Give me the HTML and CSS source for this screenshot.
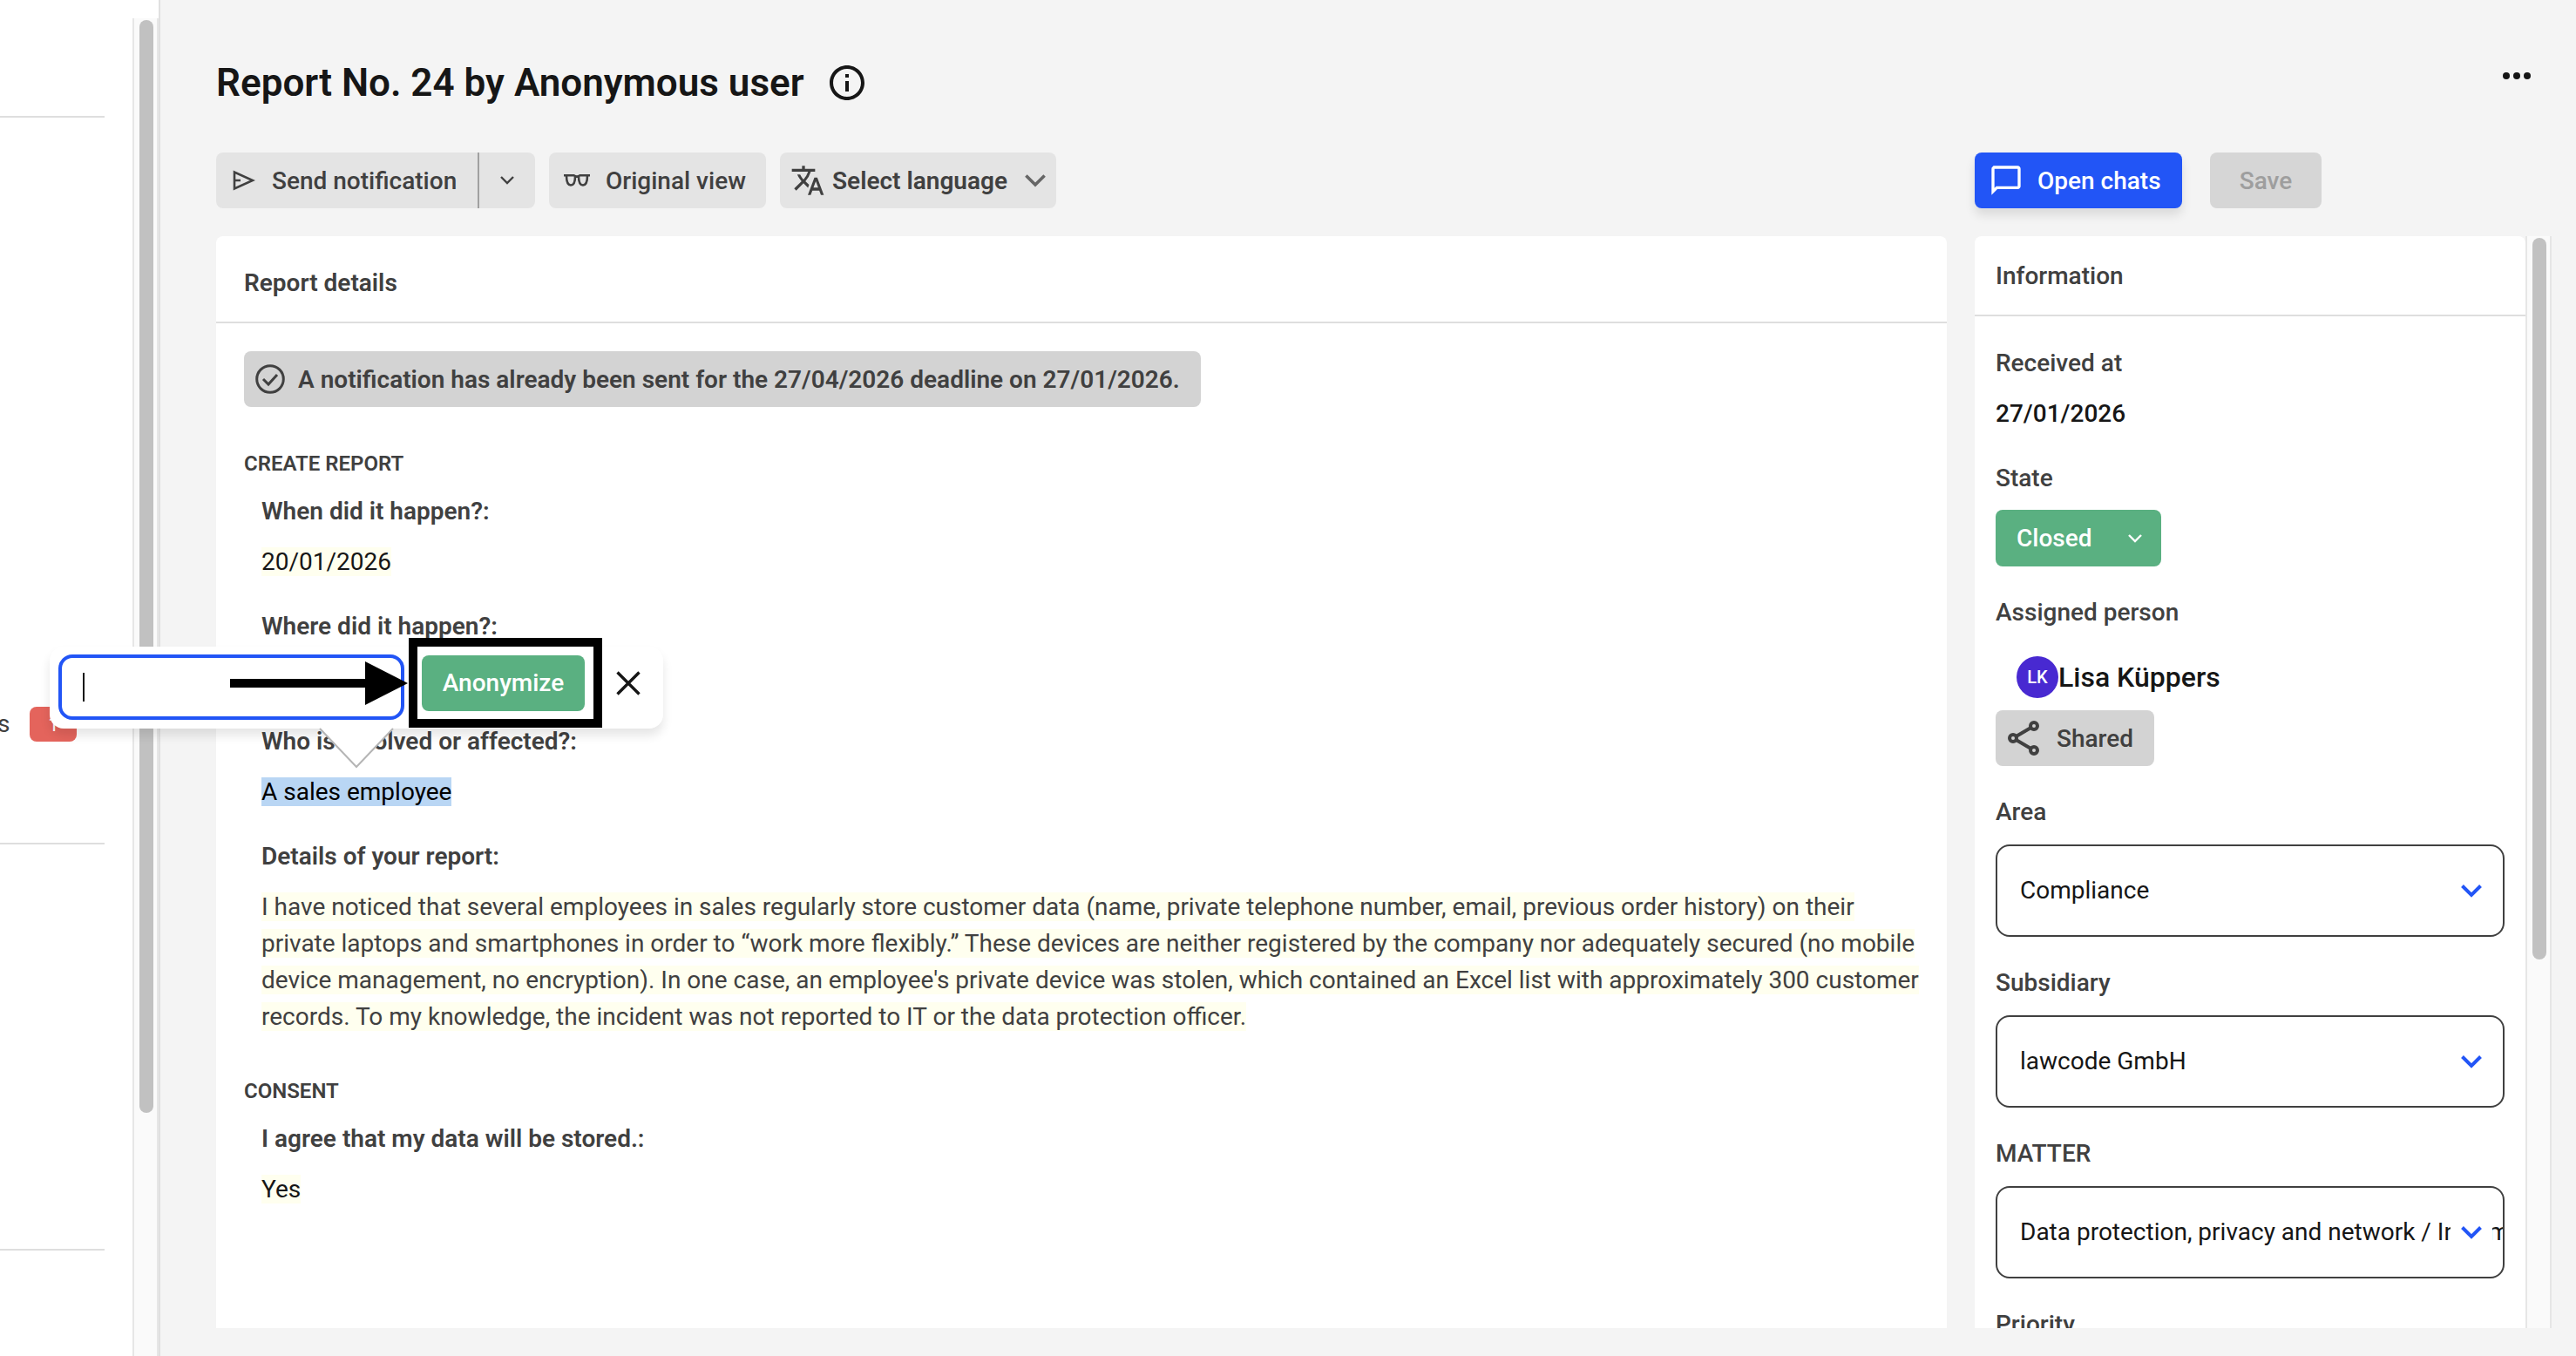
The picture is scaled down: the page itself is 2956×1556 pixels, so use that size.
FILE: index.html
```html
<!DOCTYPE html>
<html lang="en">

<head>
    <meta charset="UTF-8">
    <meta name="viewport" content="width=device-width, initial-scale=1.0">
    <title>Report No. 24</title>
    <link rel="stylesheet" href="styles.css">
</head>

<body>
    <aside class="sidebar">
        <nav class="nav">
            <div class="nav-group"></div>
            <div class="nav-group nav-group-open">
                <div class="nav-item"><span>s</span><span class="badge">1</span></div>
            </div>
            <div class="nav-group nav-group-last"></div>
        </nav>
        <div class="track side-track"><div class="thumb"></div></div>
    </aside>

    <main class="main">
        <header class="title-row">
            <h1>Report No. 24 by Anonymous user</h1>
            <svg class="info-icon" width="48" height="48" viewBox="0 0 24 24" fill="currentColor"><path d="M11 7h2v2h-2zm0 4h2v6h-2zm1-9C6.48 2 2 6.48 2 12s4.48 10 10 10 10-4.48 10-10S17.52 2 12 2zm0 18c-4.41 0-8-3.59-8-8s3.590-8 8-8 8 3.590 8 8-3.590 8-8 8z"/></svg>
            <svg class="more-icon" width="32" height="8" viewBox="0 0 32 8" fill="currentColor"><circle cx="4" cy="4" r="4"/><circle cx="16" cy="4" r="4"/><circle cx="28" cy="4" r="4"/></svg>
        </header>

        <div class="columns">
            <section class="left">
                <div class="toolbar">
                    <div class="btn split">
                        <div class="split-main">
                            <svg width="26" height="24" viewBox="0 0 26 24" fill="none" stroke="currentColor" stroke-width="2.6"><path d="M2 2.500v19L23 12zM2 12h7"/></svg>
                            <span>Send notification</span>
                        </div>
                        <div class="split-arrow">
                            <svg width="16" height="10" viewBox="0 0 16 10" fill="none" stroke="currentColor" stroke-width="2.4"><path d="M1 1l7 7 7-7"/></svg>
                        </div>
                    </div>
                    <div class="btn view">
                        <svg width="30" height="16" viewBox="0 0 30 16" fill="none" stroke="currentColor" stroke-width="2.6"><path d="M0 2.300h11.500q3.500 2.500 7 0H30M3 2.500c0 7 1.500 11 5 11s5-4 5-10M27 2.500c0 7-1.500 11-5 11s-5-4-5-10"/></svg>
                        <span>Original view</span>
                    </div>
                    <div class="btn language">
                        <svg width="40" height="40" viewBox="0 0 24 24" fill="currentColor"><path d="M12.870 15.070l-2.540-2.510.03-.03A17.520 17.520 0 0 0 14.070 6H17V4h-7V2H8v2H1v2h11.170C11.500 7.920 10.440 9.750 9 11.350 8.070 10.320 7.300 9.190 6.690 8h-2c.73 1.630 1.730 3.170 2.980 4.560l-5.090 5.020L4 19l5-5 3.110 3.110.76-2.040zM18.500 10h-2L12 22h2l1.120-3h4.750L21 22h2l-4.500-12zm-2.620 7l1.620-4.330L19.120 17h-3.240z"/></svg>
                        <span>Select language</span>
                        <svg class="language-arrow" width="24" height="15" viewBox="0 0 24 15" fill="none" stroke="#666" stroke-width="3.600"><path d="M1.400 1.400L12 12l10.600-10.600"/></svg>
                    </div>
                </div>

                <article class="card report">
                    <h2>Report details</h2>
                    <div class="report-body">
                        <div class="notice">
                            <svg width="34" height="34" viewBox="0 0 34 34" fill="none" stroke="currentColor" stroke-width="3"><circle cx="17" cy="17" r="15.300"/><path d="M9 17l6 6 10-11"/></svg>
                            <span>A notification has already been sent for the 27/04/2026 deadline on 27/01/2026.</span>
                        </div>

                        <h3>CREATE REPORT</h3>
                        <dl>
                            <dt>When did it happen?:</dt>
                            <dd><mark>20/01/2026</mark></dd>
                            <dt>Where did it happen?:</dt>
                            <dd></dd>
                            <dt>Who is involved or affected?:</dt>
                            <dd><mark class="selected">A sales employee</mark></dd>
                            <dt>Details of your report:</dt>
                            <dd class="long"><mark>I have noticed that several employees in sales regularly store customer data (name, private telephone number, email, previous order history) on their private laptops and smartphones in order to “work more flexibly.” These devices are neither registered by the company nor adequately secured (no mobile device management, no encryption). In one case, an employee's private device was stolen, which contained an Excel list with approximately 300 customer records. To my knowledge, the incident was not reported to IT or the data protection officer.</mark></dd>
                        </dl>

                        <h3>CONSENT</h3>
                        <dl>
                            <dt>I agree that my data will be stored.:</dt>
                            <dd><mark>Yes</mark></dd>
                        </dl>
                    </div>
                </article>
            </section>

            <section class="right">
                <div class="toolbar actions">
                    <div class="btn chats">
                        <svg width="40" height="40" viewBox="0 0 24 24" fill="currentColor"><path d="M20 2H4c-1.100 0-2 .9-2 2v18l4-4h14c1.100 0 2-.9 2-2V4c0-1.100-.9-2-2-2zm0 14H5.200L4 17.200V4h16v12z"/></svg>
                        <span>Open chats</span>
                    </div>
                    <div class="btn save"><span>Save</span></div>
                </div>

                <div class="info-wrap">
                    <div class="card info">
                        <h2>Information</h2>
                        <div class="info-body">
                            <div class="label">Received at</div>
                            <div class="date">27/01/2026</div>
                            <div class="label">State</div>
                            <div class="state">
                                <span>Closed</span>
                                <svg width="16" height="10" viewBox="0 0 16 10" fill="none" stroke="currentColor" stroke-width="2.400"><path d="M1 1l7 7 7-7"/></svg>
                            </div>
                            <div class="label">Assigned person</div>
                            <div class="person"><span class="avatar">LK</span><span>Lisa Küppers</span></div>
                            <div class="shared">
                                <svg width="36" height="40" viewBox="0 0 36 40" fill="none" stroke="currentColor" stroke-width="4"><circle cx="6" cy="20" r="4"/><circle cx="30" cy="6" r="4"/><circle cx="30" cy="34" r="4"/><path d="M9.500 18L26.500 8M9.500 22l17 10"/></svg>
                                <span>Shared</span>
                            </div>
                            <div class="label">Area</div>
                            <div class="select">
                                <span>Compliance</span>
                                <div class="select-arrow"><svg width="24" height="15" viewBox="0 0 24 15" fill="none" stroke="currentColor" stroke-width="4"><path d="M1.500 1.500L12 12 22.500 1.500"/></svg></div>
                            </div>
                            <div class="label">Subsidiary</div>
                            <div class="select">
                                <span>lawcode GmbH</span>
                                <div class="select-arrow"><svg width="24" height="15" viewBox="0 0 24 15" fill="none" stroke="currentColor" stroke-width="4"><path d="M1.500 1.500L12 12 22.500 1.500"/></svg></div>
                            </div>
                            <div class="label">MATTER</div>
                            <div class="select">
                                <span>Data protection, privacy and network / Information</span>
                                <div class="select-arrow"><svg width="24" height="15" viewBox="0 0 24 15" fill="none" stroke="currentColor" stroke-width="4"><path d="M1.500 1.500L12 12 22.500 1.500"/></svg></div>
                            </div>
                            <div class="label">Priority</div>
                        </div>
                    </div>
                    <div class="track info-track"><div class="thumb"></div></div>
                </div>
            </section>
        </div>
    </main>

    <!-- anonymize popup over the selected text -->
    <div class="popup">
        <div class="popup-input"><span class="caret"></span></div>
        <div class="anonymize">Anonymize</div>
        <svg class="close" width="28" height="28" viewBox="0 0 28 28" fill="none" stroke="#161616" stroke-width="3.400"><path d="M1.500 1.500l25 25M26.500 1.500l-25 25"/></svg>
        <svg class="tip" width="86" height="47" viewBox="0 0 86 47"><path d="M0 0l43 45L86 0z" fill="#fff"/><path d="M1 1l42 44L85 1" fill="none" stroke="#b5b5b5" stroke-width="2"/></svg>
    </div>
    <svg class="pointer" width="204" height="50" viewBox="0 0 204 50"><path d="M0 20h155V0l49 25-49 25V30H0z"/></svg>
    <div class="frame"></div>
</body>

</html>
```

FILE: styles.css
```css
* {
    box-sizing: border-box;
}

body {
    margin: 0;
    height: 1556px;
    display: flex;
    position: relative;
    overflow: hidden;
    background: #f4f4f4;
    color: #404040;
    font-family: Roboto, "Liberation Sans", sans-serif;
    font-size: 28px;
    line-height: 42px;
}

svg {
    display: block;
    flex: none;
}

h1,
h2,
h3,
dl,
dd {
    margin: 0;
    font-weight: 600;
}

/* sidebar */
.sidebar {
    width: 184px;
    flex: none;
    display: flex;
    justify-content: space-between;
    background: #fff;
    border-right: 2px solid #e0e0e0;
}

.nav {
    width: 120px;
}

.nav-group {
    height: 135px;
    border-bottom: 2px solid #dedede;
}

.nav-group-open {
    height: 834px;
    padding-top: 675px;
}

.nav-group-last {
    height: 466px;
}

.nav-item {
    display: flex;
    align-items: center;
    gap: 23px;
    margin-left: -3px;
}

.badge {
    width: 54px;
    height: 40px;
    border-radius: 8px;
    background: #e4645c;
    color: #fff;
    font-size: 22px;
    line-height: 42px;
    text-align: center;
}

.track {
    width: 30px;
    border: solid #e6e6e6;
    border-width: 0 2px;
    background: #fafafa;
    padding: 2px 6px;
}

.side-track {
    margin-top: 21px;
}

.thumb {
    width: 16px;
    border-radius: 8px;
    background: #c1c1c1;
}

.side-track .thumb {
    height: 1254px;
}

/* main */
.main {
    width: 2772px;
    padding: 62px 28px 32px 64px;
    display: flex;
    flex-direction: column;
}

.title-row {
    height: 113px;
    display: flex;
    align-items: flex-start;
    color: #161616;
}

h1 {
    font-size: 44px;
    line-height: 66px;
}

.info-icon {
    margin: 9px 0 0 25px;
}

.more-icon {
    margin: 21px 24px 0 auto;
}

.columns {
    flex: 1;
    min-height: 0;
    display: flex;
    gap: 32px;
}

.left {
    width: 1986px;
    display: flex;
    flex-direction: column;
}

.right {
    width: 662px;
    display: flex;
    flex-direction: column;
}

.toolbar {
    display: flex;
    gap: 16px;
    margin-bottom: 32px;
}

.actions {
    gap: 32px;
}

.btn {
    height: 64px;
    display: flex;
    align-items: center;
    border-radius: 8px;
    background: #e4e4e4;
    font-weight: 500;
    white-space: nowrap;
}

.btn span,
.notice span,
.shared span {
    padding-top: 2px;
}

.split {
    width: 366px;
}

.split-main {
    width: 302px;
    height: 64px;
    display: flex;
    align-items: center;
    gap: 19px;
    padding-left: 19px;
    border-right: 2px solid #a0a0a0;
}

.split-arrow {
    flex: 1;
    display: flex;
    justify-content: center;
}

.view {
    width: 249px;
    padding-left: 17px;
    gap: 18px;
}

.language {
    width: 317px;
    padding-left: 12px;
    gap: 8px;
    font-weight: 600;
}

.language-arrow {
    margin-left: 12px;
}

.chats {
    width: 238px;
    padding-left: 16px;
    gap: 16px;
    background: #2255f6;
    color: #fff;
    box-shadow: 0 8px 12px rgba(0, 0, 0, 0.1);
}

.save {
    width: 128px;
    justify-content: center;
    background: #d6d6d6;
    color: #9e9e9e;
}

.card {
    background: #fff;
    border-radius: 8px 8px 0 0;
}

.card h2 {
    font-size: 28px;
    line-height: 42px;
    border-bottom: 2px solid #dedede;
}

.report {
    flex: 1;
}

.report h2 {
    padding: 33px 32px 23px;
}

.report-body {
    padding: 32px 32px 0;
}

.notice {
    width: 1098px;
    height: 64px;
    display: flex;
    align-items: center;
    gap: 15px;
    padding-left: 13px;
    border-radius: 8px;
    background: #d3d3d3;
    font-weight: 600;
    white-space: nowrap;
}

h3 {
    margin-top: 47px;
    font-size: 24px;
    line-height: 36px;
}

dl {
    padding-left: 20px;
}

dt {
    margin-top: 16px;
    font-weight: 600;
}

dd {
    min-height: 42px;
    margin: 16px 0 32px;
    font-weight: 400;
    color: #161616;
}

dd.long {
    margin-bottom: -1px;
    color: #404040;
}

dd + dt {
    margin-top: 0;
}

mark {
    background: #ffffef;
    color: inherit;
}

mark.selected {
    background: #b9d6f4;
    color: #000;
}

/* information panel */
.info-wrap {
    flex: 1;
    min-height: 0;
    display: flex;
}

.info {
    width: 632px;
    overflow: hidden;
}

.info h2 {
    padding: 25px 24px 23px;
    font-weight: 500;
}

.info-body {
    padding: 33px 24px 0;
}

.label {
    font-weight: 500;
}

.date {
    margin: 16px 0 32px;
    font-weight: 500;
    color: #161616;
}

.state {
    width: 190px;
    height: 65px;
    margin: 15px 0 32px;
    display: flex;
    align-items: center;
    justify-content: space-between;
    padding: 0 22px 0 24px;
    border-radius: 8px;
    background: #5ab081;
    color: #fff;
    font-weight: 500;
}

.person {
    height: 48px;
    margin: 29px 0 14px 24px;
    display: flex;
    align-items: center;
    font-size: 32px;
    font-weight: 500;
    color: #161616;
}

.avatar {
    width: 48px;
    height: 48px;
    border-radius: 50%;
    background: #4829d1;
    color: #fff;
    font-size: 20px;
    line-height: 49px;
    text-align: center;
}

.shared {
    width: 182px;
    height: 64px;
    margin-bottom: 32px;
    display: flex;
    align-items: center;
    gap: 20px;
    padding-left: 14px;
    border-radius: 8px;
    background: #d3d3d3;
    font-weight: 500;
}

.select {
    height: 106px;
    margin: 16px 0 32px;
    display: flex;
    align-items: center;
    position: relative;
    overflow: hidden;
    padding-left: 26px;
    border: 2px solid #404040;
    border-radius: 16px;
    color: #161616;
    white-space: nowrap;
}

.select-arrow {
    position: absolute;
    top: 30px;
    right: 12px;
    width: 48px;
    height: 42px;
    display: flex;
    align-items: center;
    justify-content: center;
    background: #fff;
    color: #2255f6;
}

.info-track .thumb {
    height: 828px;
}

/* popup */
.popup {
    position: absolute;
    left: 57px;
    top: 742px;
    width: 704px;
    height: 94px;
    display: flex;
    align-items: flex-start;
    padding: 9px 10px;
    border-radius: 16px;
    background: #fff;
    box-shadow: 0 8px 12px rgba(0, 0, 0, 0.1);
}

.popup-input {
    width: 397px;
    height: 75px;
    padding: 17px 24px;
    border: 4px solid #2255f6;
    border-radius: 16px;
}

.caret {
    display: block;
    width: 2px;
    height: 33px;
    background: #161616;
}

.anonymize {
    width: 187px;
    height: 64px;
    margin: 1px 0 0 20px;
    border-radius: 8px;
    background: #5ab081;
    color: #fff;
    font-weight: 500;
    line-height: 64px;
    text-align: center;
}

.close {
    margin: 19px 0 0 36px;
}

.tip {
    position: absolute;
    left: 309px;
    top: 93px;
}

.pointer {
    position: absolute;
    left: 264px;
    top: 759px;
}

.frame {
    position: absolute;
    left: 469px;
    top: 732px;
    width: 222px;
    height: 103px;
    border: 10px solid #000;
}
```
